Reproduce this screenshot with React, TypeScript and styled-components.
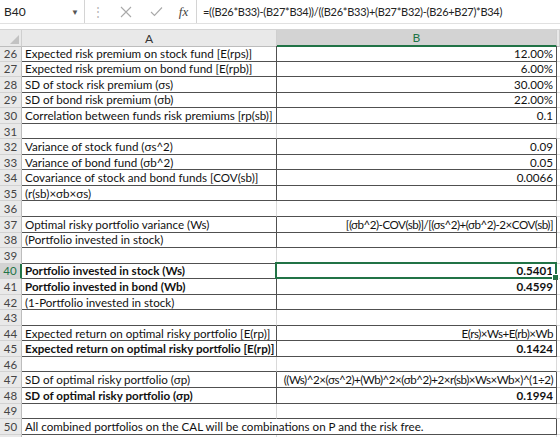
import React from "react";
import styled, { createGlobalStyle } from "styled-components";

// ------------------- Data -------------------

type SheetRow = {
  n: number;
  a?: string;
  b?: string;
  bold?: boolean;
  boxed?: boolean;
  span?: boolean;
  selected?: boolean;
  formula?: boolean;
  hideNumber?: boolean;
};

const rows: SheetRow[] = [
  { n: 26, a: "Expected risk premium on stock fund [E(rps)]", b: "12.00%", boxed: true },
  { n: 27, a: "Expected risk premium on bond fund [E(rpb)]", b: "6.00%", boxed: true },
  { n: 28, a: "SD of stock risk premium (σs)", b: "30.00%", boxed: true },
  { n: 29, a: "SD of bond risk premium (σb)", b: "22.00%", boxed: true },
  { n: 30, a: "Correlation between funds risk premiums [rp(sb)]", b: "0.1", boxed: true },
  { n: 31 },
  { n: 32, a: "Variance of stock fund (σs^2)", b: "0.09", boxed: true },
  { n: 33, a: "Variance of bond fund (σb^2)", b: "0.05", boxed: true },
  { n: 34, a: "Covariance of stock and bond funds [COV(sb)]", b: "0.0066", boxed: true },
  { n: 35, a: "(r(sb)×σb×σs)", b: "", boxed: true },
  { n: 36 },
  { n: 37, a: "Optimal risky portfolio variance (Ws)", b: "[(σb^2)-COV(sb)]/[(σs^2)+(σb^2)-2×COV(sb)]", boxed: true, formula: true },
  { n: 38, a: "(Portfolio invested in stock)", b: "", boxed: true },
  { n: 39 },
  { n: 40, a: "Portfolio invested in stock (Ws)", b: "0.5401", bold: true, boxed: true, selected: true },
  { n: 41, a: "Portfolio invested in bond (Wb)", b: "0.4599", bold: true, boxed: true },
  { n: 42, a: "(1-Portfolio invested in stock)", b: "", boxed: true },
  { n: 43 },
  { n: 44, a: "Expected return on optimal risky portfolio [E(rp)]", b: "E(rs)×Ws+E(rb)×Wb", boxed: true, formula: true },
  { n: 45, a: "Expected return on optimal risky portfolio [E(rp)]", b: "0.1424", bold: true, boxed: true },
  { n: 46 },
  { n: 47, a: "SD of optimal risky portfolio (σp)", b: "((Ws)^2×(σs^2)+(Wb)^2×(σb^2)+2×r(sb)×Ws×Wb×)^(1÷2)", boxed: true, formula: true },
  { n: 48, a: "SD of optimal risky portfolio (σp)", b: "0.1994", bold: true, boxed: true },
  { n: 49 },
  { n: 50, a: "All combined portfolios on the CAL will be combinations on P and the risk free.", boxed: true, span: true },
  { n: 51, hideNumber: true },
];

const GREEN = "#217346";
const GRID = "#d9d9d9";
const LINE = "#505050";
const COLS = "22px 255px 280px 1fr";

// ------------------- Styled Components -------------------

const GlobalStyle = createGlobalStyle`
  html, body {
    margin: 0;
    padding: 0;
    background: #fff;
  }
  body {
    font-family: Lato, "Liberation Sans", Arial, sans-serif;
    overflow: hidden;
  }
`;

const Window = styled.div`
  width: 560px;
  height: 437px;
  overflow: hidden;
  background: #fff;
`;

const FormulaBar = styled.div`
  display: flex;
  align-items: center;
  height: 23px;
  border-bottom: 1px solid #e1e1e1;
  color: #222;
`;

const NameBox = styled.div`
  width: 85px;
  height: 23px;
  box-sizing: border-box;
  display: flex;
  align-items: center;
  justify-content: space-between;
  padding: 0 5px 0 4px;
  border-right: 1px solid #d4d4d4;
  font-size: 12px;
`;

const Caret = styled.span`
  font-size: 8px;
  color: #555;
`;

const BarIcons = styled.div`
  display: flex;
  align-items: center;
  width: 111px;
  height: 23px;
  color: #a6a6a6;
`;

const Dots = styled.span`
  width: 26px;
  text-align: center;
  font-size: 12px;
  color: #b4b4b4;
`;

const BarButton = styled.span<{ $w: number }>`
  width: ${(p) => p.$w}px;
  display: flex;
  justify-content: center;
`;

const Fx = styled.span`
  font-family: "Liberation Serif", serif;
  font-style: italic;
  font-size: 13px;
  color: #444;
`;

const FormulaInput = styled.div`
  flex: 1;
  height: 23px;
  display: flex;
  align-items: center;
  padding-left: 6px;
  border-left: 1px solid #d4d4d4;
  font-size: 11px;
  letter-spacing: -0.28px;
  white-space: nowrap;
`;

const Gap = styled.div`
  height: 5px;
  background: #fff;
`;

const HeaderRow = styled.div`
  display: grid;
  grid-template-columns: ${COLS};
  height: 16px;
  background: #e9e9e9;
  border-top: 1px solid #d4d4d4;
`;

const Corner = styled.div`
  position: relative;
  border-right: 1px solid #cfcfcf;
  border-bottom: 1px solid #bdbdbd;
  &::after {
    content: "";
    position: absolute;
    right: 2px;
    bottom: 2px;
    border-style: solid;
    border-width: 0 0 9px 9px;
    border-color: transparent transparent #c2c2c2 transparent;
  }
`;

const ColHead = styled.div<{ $active?: boolean }>`
  display: flex;
  align-items: center;
  justify-content: center;
  font-size: 12px;
  color: ${(p) => (p.$active ? GREEN : "#333")};
  background: ${(p) => (p.$active ? "#d3d3d3" : "#e9e9e9")};
  border-right: 1px solid #cfcfcf;
  border-bottom: ${(p) => (p.$active ? `2px solid ${GREEN}` : "1px solid #bdbdbd")};
  box-sizing: border-box;
`;

const Row = styled.div`
  display: grid;
  grid-template-columns: ${COLS};
  height: 15.56px;
  font-size: 11.6px;
`;

const RowHead = styled.div<{ $active?: boolean }>`
  display: flex;
  align-items: center;
  justify-content: center;
  font-size: 11.5px;
  color: ${(p) => (p.$active ? GREEN : "#444")};
  background: ${(p) => (p.$active ? "#d3d3d3" : "#e9e9e9")};
  border-right: ${(p) => (p.$active ? `2px solid ${GREEN}` : "1px solid #bdbdbd")};
  border-bottom: 1px solid #d2d2d2;
  box-sizing: border-box;
`;

const Cell = styled.div<{
  $right?: boolean;
  $bold?: boolean;
  $dark?: boolean;
  $darkBottom?: boolean;
  $span?: boolean;
  $formula?: boolean;
}>`
  position: relative;
  display: flex;
  align-items: center;
  justify-content: ${(p) => (p.$right ? "flex-end" : "flex-start")};
  padding: 0 3px;
  box-sizing: border-box;
  white-space: nowrap;
  overflow: visible;
  color: #111;
  letter-spacing: ${(p) => (p.$formula ? "-0.5px" : "normal")};
  font-weight: ${(p) => (p.$bold ? 700 : 400)};
  grid-column: ${(p) => (p.$span ? "span 2" : "auto")};
  border-right: 1px solid ${(p) => (p.$dark ? LINE : GRID)};
  border-bottom: 1px solid ${(p) => (p.$darkBottom ? LINE : GRID)};
`;

const Selection = styled.div`
  position: absolute;
  left: -2px;
  top: -2px;
  right: -1px;
  bottom: -1px;
  border: 2px solid ${GREEN};
  pointer-events: none;
  &::after {
    content: "";
    position: absolute;
    right: -4px;
    bottom: -4px;
    width: 5px;
    height: 5px;
    background: ${GREEN};
    border: 1px solid #fff;
  }
`;

const Spill = styled.div`
  border-bottom: 1px solid ${GRID};
`;

// ------------------- Icons -------------------

const Cross = () => (
  <svg width="12" height="12" viewBox="0 0 12 12">
    <path d="M1 1 L11 11 M11 1 L1 11" stroke="#a9a9a9" strokeWidth="1.1" fill="none" />
  </svg>
);

const Check = () => (
  <svg width="13" height="11" viewBox="0 0 13 11">
    <path d="M1 6 L4.5 9.5 L12 1.5" stroke="#a9a9a9" strokeWidth="1.1" fill="none" />
  </svg>
);

// ------------------- Component -------------------

function App(): JSX.Element {
  return (
    <Window>
      <GlobalStyle />
      <FormulaBar>
        <NameBox>
          B40
          <Caret>▼</Caret>
        </NameBox>
        <BarIcons>
          <Dots>⋮</Dots>
          <BarButton $w={30}>
            <Cross />
          </BarButton>
          <BarButton $w={30}>
            <Check />
          </BarButton>
          <BarButton $w={25}>
            <Fx>fx</Fx>
          </BarButton>
        </BarIcons>
        <FormulaInput>
          =((B26*B33)-(B27*B34))/((B26*B33)+(B27*B32)-(B26+B27)*B34)
        </FormulaInput>
      </FormulaBar>
      <Gap />
      <HeaderRow>
        <Corner />
        <ColHead>A</ColHead>
        <ColHead $active>B</ColHead>
        <ColHead />
      </HeaderRow>
      {rows.map((r, i) => {
        const next = rows[i + 1];
        const darkBottom = !!r.boxed || !!next?.boxed;
        return (
          <Row key={r.n}>
            <RowHead $active={r.selected}>{r.hideNumber ? "" : r.n}</RowHead>
            <Cell $bold={r.bold} $dark={r.boxed} $darkBottom={darkBottom} $span={r.span}>
              {r.a}
            </Cell>
            {!r.span && (
              <Cell
                $right
                $bold={r.bold}
                $dark={r.boxed}
                $darkBottom={darkBottom}
                $formula={r.formula}
              >
                {r.b}
                {r.selected && <Selection />}
              </Cell>
            )}
            <Spill />
          </Row>
        );
      })}
    </Window>
  );
}

export default App;
